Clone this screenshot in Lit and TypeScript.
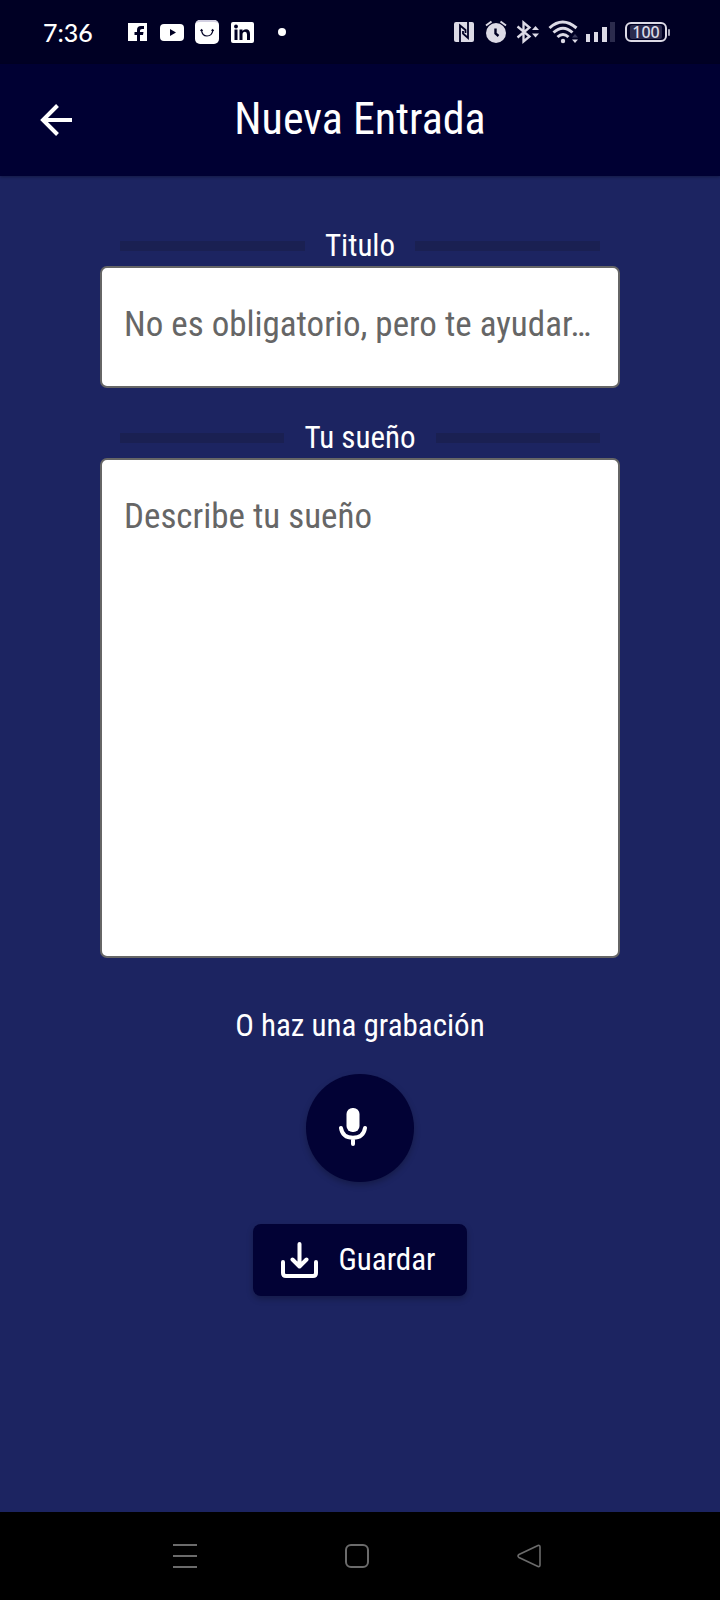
import { LitElement, html, css } from "lit";
import { customElement, state } from "lit/decorators.js";

@customElement("status-bar")
class StatusBar extends LitElement {
  static styles = css`
    :host {
      display: flex;
      align-items: center;
      justify-content: space-between;
      height: 64px;
      padding: 0 48px 0 43px;
      background: #000024;
      color: #fff;
      font-family: Lato, sans-serif;
    }
    .group { display: flex; align-items: center; }
    .left { gap: 11px; }
    .right { gap: 8px; color: #dcdae6; }
    .time { font-size: 25px; line-height: 32px; font-weight: 500; margin-right: 21px; }
    svg { display: block; }
    .battery { display: flex; align-items: center; width: 47px; gap: 1px; margin-left: 1px; }
    .cell {
      box-sizing: border-box;
      width: 42px;
      height: 20px;
      padding: 1px 3px;
      border: 2px solid #dcdae6;
      border-radius: 6px;
    }
    .level {
      display: block;
      background: #2b2b4d;
      border-radius: 2px;
      font-family: "Noto Sans", sans-serif;
      font-size: 16px;
      line-height: 14px;
      text-align: center;
      font-weight: 500;
    }
    .nub { width: 2px; height: 7px; background: #a9a8bb; border-radius: 1px; }
  `;

  render() {
    return html`
      <div class="group left">
        <span class="time">7:36</span>
        <svg width="24" height="24" viewBox="0 0 24 24" aria-hidden="true">
          <rect x="3" y="3" width="19" height="18" fill="#fff"/>
          <path fill="#000024" d="M12 21v-6h-2.500v-3H12v-2q0-4 4-4h3v3h-2q-2 0-2 1.500V12h3.500l-.5 3h-3v6z"/>
        </svg>
        <svg width="24" height="24" viewBox="0 0 24 24" aria-hidden="true">
          <rect x="0" y="4" width="24" height="17" rx="4" fill="#fff"/>
          <path fill="#000024" d="M10 9l6 3.500-6 3.500z"/>
        </svg>
        <svg width="24" height="24" viewBox="0 0 24 24" aria-hidden="true">
          <rect width="24" height="24" rx="5" fill="#fff"/>
          <path d="M1 3Q2 0 5 0h14q3 0 4 3-2-1-4-1H5Q3 2 1 3z" fill="#d3d0e2"/>
          <path d="M6.500 10q.5 6 5.500 6t6-6M5.500 11l1-1.300 1.200 1M16.500 10.700l1.200-1 1 1.300" fill="none" stroke="#000024" stroke-width="1.200"/>
        </svg>
        <svg width="24" height="24" viewBox="0 0 24 24" aria-hidden="true">
          <rect x="1" y="2" width="23" height="21" rx="2" fill="#fff"/>
          <g fill="#000024">
            <circle cx="6" cy="6.500" r="1.900"/>
            <path d="M4.500 9.500h3V20h-3zM9.500 9.500h3V11q1-1.800 3.500-1.800 4 0 4 4.800v6h-3v-5.500q0-2.700-2-2.700-2.500 0-2.500 2.700V20h-3z"/>
          </g>
        </svg>
        <svg width="24" height="24" viewBox="0 0 24 24" aria-hidden="true">
          <circle cx="17" cy="12" r="4" fill="#fff"/>
        </svg>
      </div>
      <div class="group right">
        <svg width="24" height="24" viewBox="0 0 24 24" aria-hidden="true">
          <rect x="2" y="2" width="20" height="20" rx="2" fill="currentColor"/>
          <path d="M8 22V5.500l5.500 4.500V13M16 2v16l-5-4.500V11" fill="none" stroke="#000024" stroke-width="1.800"/>
        </svg>
        <svg width="24" height="24" viewBox="0 0 24 24" aria-hidden="true">
          <circle cx="12" cy="13" r="10" fill="currentColor"/>
          <path d="M2 5.500L7.500 1.500M22 5.500L16.500 1.500" stroke="currentColor" stroke-width="2"/>
          <path d="M11.500 8.500v5l3 2.500" fill="none" stroke="#000024" stroke-width="2.400"/>
        </svg>
        <svg width="24" height="24" viewBox="0 0 24 24" aria-hidden="true">
          <path d="M1.500 6.500l12 10-6 5V2.500l6 5-12 10" fill="none" stroke="currentColor" stroke-width="2.300"/>
          <path d="M16 10l3.500-4 3.500 4zM16 13.500h7l-3.500 4z" fill="currentColor"/>
        </svg>
        <svg width="30" height="24" viewBox="0 0 30 24" aria-hidden="true">
          <path d="M1.500 8q13-12 27 0M5.500 12.500q9.500-8.500 19 0M9.500 17q5.500-5 11 0" fill="none" stroke="currentColor" stroke-width="3"/>
          <circle cx="15" cy="21" r="2.200" fill="currentColor"/>
          <path d="M24 17.500l3-3.500 3 3.500z" fill="#3a3a5c"/>
          <path d="M24 19.500h6l-3 3.500z" fill="currentColor"/>
        </svg>
        <svg width="30" height="24" viewBox="0 0 30 24" aria-hidden="true">
          <path d="M0 14h4v8H0zM8 12h4v10H8zM16 7h5v15h-5z" fill="currentColor"/>
          <path d="M24 2h5v20h-5z" fill="#2b2b4d"/>
        </svg>
        <span class="battery">
          <span class="cell"><span class="level">100</span></span>
          <span class="nub"></span>
        </span>
      </div>
    `;
  }
}

@customElement("nav-bar")
class NavBar extends LitElement {
  static styles = css`
    :host {
      display: flex;
      align-items: center;
      justify-content: center;
      gap: 124px;
      height: 88px;
      padding-right: 6px;
      background: #000;
    }
    button {
      display: grid;
      place-items: center;
      width: 48px;
      height: 48px;
      padding: 0;
      border: 0;
      background: none;
      color: #6b6b6b;
    }
    svg { display: block; fill: none; stroke: currentColor; stroke-width: 2; }
  `;

  render() {
    return html`
      <button aria-label="Recientes">
        <svg width="24" height="24" viewBox="0 0 24 24"><path d="M0 1h24M0 12h24M0 23h24"/></svg>
      </button>
      <button aria-label="Inicio">
        <svg width="24" height="24" viewBox="0 0 24 24"><rect x="1" y="1" width="22" height="22" rx="5"/></svg>
      </button>
      <button aria-label="Atrás">
        <svg width="24" height="24" viewBox="0 0 24 24">
          <path d="M21 1.500L2 10.500q-2 1.500 0 3L21 22.500q2 .5 2-1.500V3q0-2-2-1.500z" stroke-width="1.600"/>
        </svg>
      </button>
    `;
  }
}

@customElement("app-root")
class AppRoot extends LitElement {
  @state() private entryTitle = "";
  @state() private dream = "";

  static styles = css`
    :host {
      display: flex;
      flex-direction: column;
      min-height: 100vh;
      background: #1c2461;
      color: #fff;
      font-family: "Roboto Condensed", "Liberation Sans Narrow", Roboto, sans-serif;
    }
    .bar {
      display: grid;
      grid-template-columns: 48px 1fr 48px;
      align-items: center;
      height: 112px;
      padding: 0 32px;
      background: #000033;
      box-shadow: 0 1px 3px rgba(0, 0, 0, 0.3);
    }
    h1 {
      margin: 0;
      padding-bottom: 2px;
      font-size: 44px;
      line-height: 52px;
      font-weight: 400;
      text-align: center;
    }
    button { font: inherit; color: inherit; border: 0; padding: 0; cursor: pointer; }
    svg { display: block; }
    .back { display: grid; place-items: center; width: 48px; height: 48px; background: none; }
    form {
      flex: 1;
      display: flex;
      flex-direction: column;
      align-items: center;
      padding: 50px 100px 0;
    }
    .field { align-self: stretch; display: flex; flex-direction: column; }
    .field + .field { margin-top: 30px; }
    .label {
      display: flex;
      align-items: center;
      gap: 20px;
      height: 40px;
      padding: 0 20px;
      font-size: 31px;
      line-height: 36px;
    }
    .label::before,
    .label::after {
      content: "";
      flex: 1;
      height: 10px;
      background: #1a2052;
    }
    input,
    textarea {
      box-sizing: border-box;
      display: block;
      width: 100%;
      margin: 0;
      border: 2px solid #666;
      border-radius: 7px;
      background: #fff;
      color: #222;
      font: inherit;
      font-size: 35px;
      line-height: 40px;
      outline: none;
      resize: none;
    }
    input { height: 122px; padding: 0 20px 6px 22px; text-overflow: ellipsis; }
    textarea { height: 500px; padding: 37px 22px; }
    ::placeholder { color: #666; opacity: 1; }
    .hint { margin: 49px 0 29px; font-size: 31px; line-height: 38px; }
    .mic,
    .save {
      background: #020235;
      box-shadow: 0 3px 6px rgba(0, 0, 0, 0.25);
    }
    .mic {
      display: grid;
      place-items: center;
      width: 108px;
      height: 108px;
      padding: 0 15px 2px 0;
      border-radius: 50%;
    }
    .save {
      display: flex;
      align-items: center;
      gap: 21px;
      height: 72px;
      margin-top: 42px;
      padding: 0 32px 0 28px;
      border-radius: 8px;
      font-size: 31px;
      line-height: 36px;
    }
  `;

  render() {
    return html`
      <status-bar></status-bar>
      <header class="bar">
        <button class="back" aria-label="Volver">
          <svg width="32" height="32" viewBox="0 0 32 32">
            <path d="M32 16H3M17.500 1.500L3 16l14.500 14.500" fill="none" stroke="#fff" stroke-width="4"/>
          </svg>
        </button>
        <h1>Nueva Entrada</h1>
      </header>
      <form @submit=${(e: Event) => e.preventDefault()}>
        <div class="field">
          <label class="label" for="title">Titulo</label>
          <input id="title" type="text" placeholder="No es obligatorio, pero te ayudar…"
            .value=${this.entryTitle}
            @input=${(e: Event) => (this.entryTitle = (e.target as HTMLInputElement).value)} />
        </div>
        <div class="field">
          <label class="label" for="dream">Tu sueño</label>
          <textarea id="dream" placeholder="Describe tu sueño"
            .value=${this.dream}
            @input=${(e: Event) => (this.dream = (e.target as HTMLTextAreaElement).value)}></textarea>
        </div>
        <p class="hint">O haz una grabación</p>
        <button class="mic" type="button" aria-label="Grabar">
          <svg width="28" height="38" viewBox="0 0 28 38">
            <rect x="7.500" y="0" width="13" height="24" rx="6" fill="#fff"/>
            <path d="M2 20q1.500 9.800 12 9.800T26 20M14 30v6" fill="none" stroke="#fff" stroke-width="4" stroke-linecap="round"/>
          </svg>
        </button>
        <button class="save" type="submit">
          <svg width="37" height="36" viewBox="0 0 37 36" fill="none" stroke="#fff" stroke-width="4" stroke-linecap="round" stroke-linejoin="round">
            <path d="M2 20v11q0 3 3 3h27q3 0 3-3V20M18.500 2v22M11.500 17.500l7 7 7-7"/>
          </svg>
          <span>Guardar</span>
        </button>
      </form>
      <nav-bar></nav-bar>
    `;
  }
}
